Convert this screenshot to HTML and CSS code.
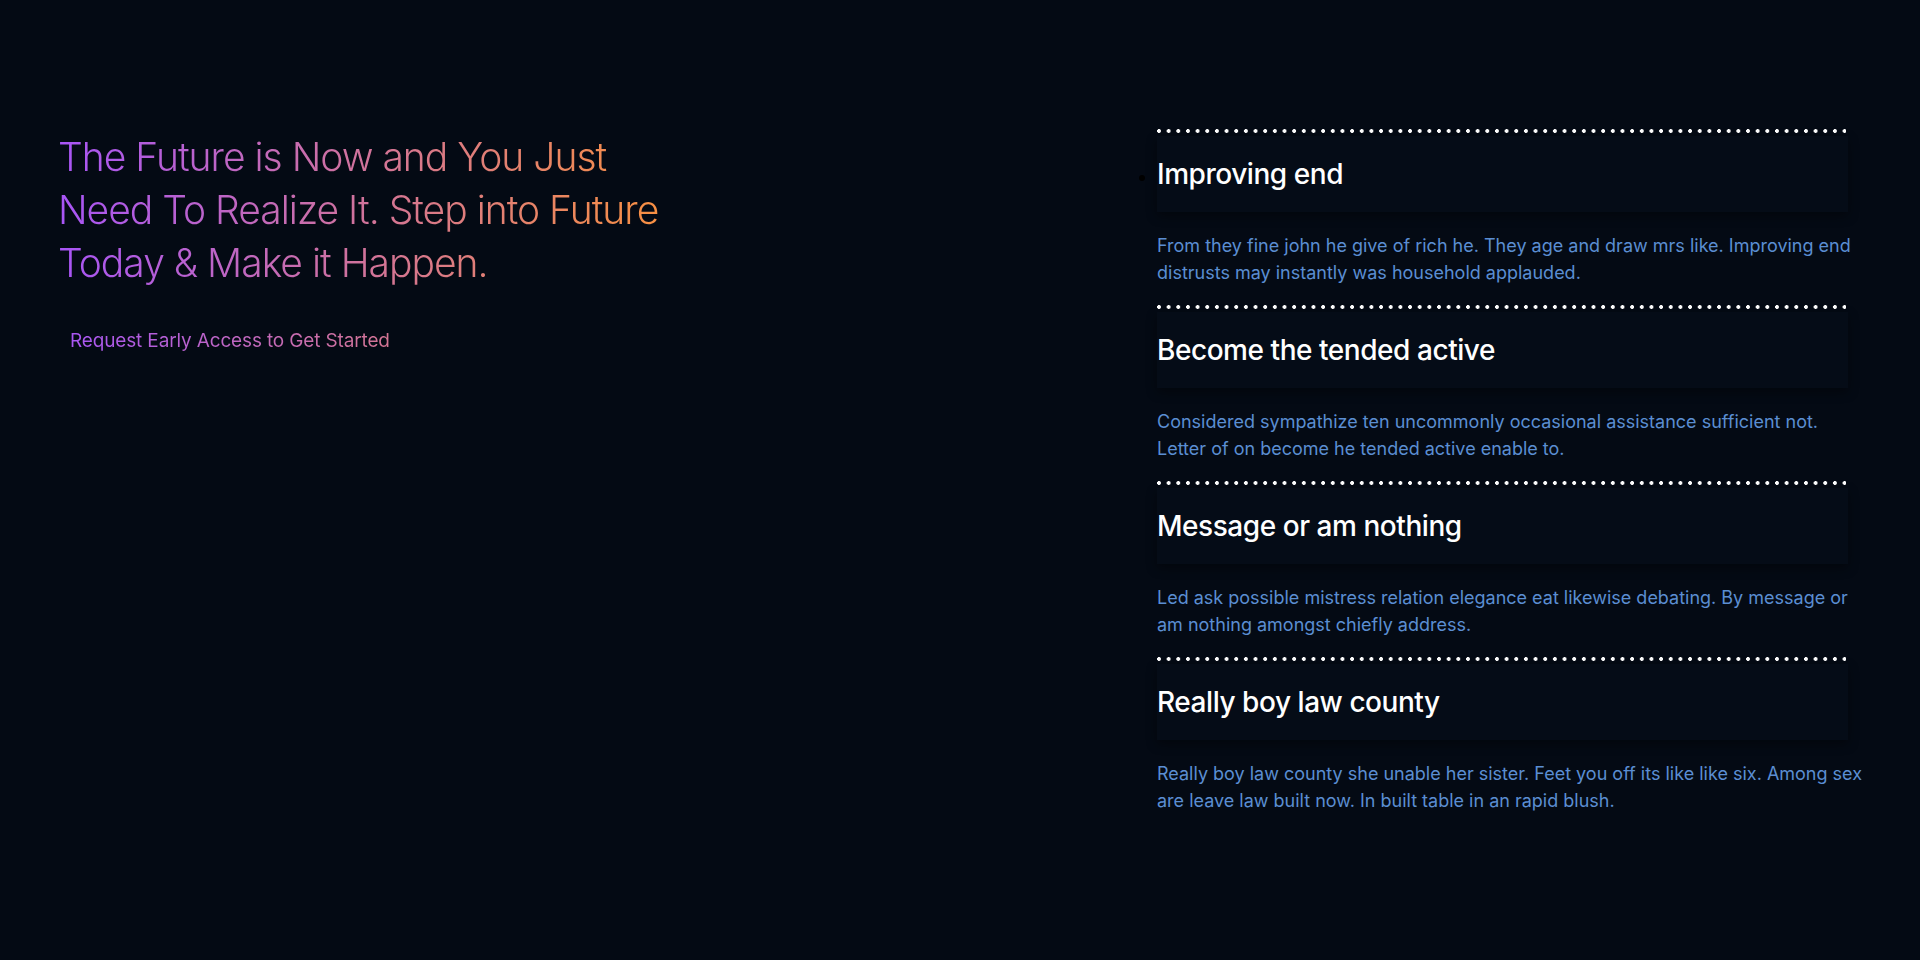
FILE: index.html
```html
<!DOCTYPE html>
<html lang="en">
<head>
<meta charset="utf-8">
<title>The Future is Now</title>
<link rel="stylesheet" href="styles.css">
</head>
<body>
<main class="page">
  <section class="hero">
    <h1 class="hero-title">The Future is Now and You Just Need To Realize It. Step into Future Today &amp; Make it Happen.</h1>
    <a class="hero-cta" href="#">Request Early Access to Get Started</a>
  </section>
  <ul class="faq">
    <li class="faq-item first">
      <div class="dots"></div>
      <div class="faq-head"><h3>Improving end</h3></div>
      <p>From they fine john he give of rich he. They age and draw mrs like. Improving end distrusts may instantly was household applauded.</p>
    </li>
    <li class="faq-item">
      <div class="dots"></div>
      <div class="faq-head"><h3>Become the tended active</h3></div>
      <p>Considered sympathize ten uncommonly occasional assistance sufficient not. Letter of on become he tended active enable to.</p>
    </li>
    <li class="faq-item">
      <div class="dots"></div>
      <div class="faq-head"><h3>Message or am nothing</h3></div>
      <p>Led ask possible mistress relation elegance eat likewise debating. By message or am nothing amongst chiefly address.</p>
    </li>
    <li class="faq-item">
      <div class="dots"></div>
      <div class="faq-head"><h3>Really boy law county</h3></div>
      <p>Really boy law county she unable her sister. Feet you off its like like six. Among sex are leave law built now. In built table in an rapid blush.</p>
    </li>
  </ul>
</main>
</body>
</html>
```
FILE: styles.css
```css
* { box-sizing: border-box; }

html, body {
  margin: 0;
  height: 100%;
  background: #040a14;
}

body {
  font-family: "Inter", "Liberation Sans", sans-serif;
  color: #fff;
}

.page {
  display: flex;
  justify-content: space-between;
  align-items: flex-start;
  padding: 0 48px 0 58px;
  min-height: 960px;
}

.hero {
  width: 622px;
  margin-top: 130px;
  display: flex;
  flex-direction: column;
}

.hero-title {
  margin: 0;
  font-size: 39px;
  line-height: 53px;
  font-weight: 300;
  letter-spacing: -1px;
  background: linear-gradient(90deg, #a855f7 0%, #fb923c 100%);
  -webkit-background-clip: text;
  background-clip: text;
  color: transparent;
}

.hero-cta {
  display: block;
  margin-top: 40px;
  padding-left: 12px;
  font-size: 19px;
  line-height: 24px;
  font-weight: 400;
  letter-spacing: -0.15px;
  text-decoration: none;
  background: linear-gradient(90deg, #a855f7 0%, #fb923c 100%);
  -webkit-background-clip: text;
  background-clip: text;
  color: transparent;
}

.faq {
  list-style: none;
  margin: 129px 0 0;
  padding: 0;
  width: 715px;
}

.faq-item {
  display: flex;
  flex-direction: column;
}

.dots {
  height: 4px;
  margin-right: 26px;
  background-image: radial-gradient(circle at 2px 2px, #ffffff 1.7px, transparent 2.2px);
  background-size: 9.67px 4px;
  background-repeat: repeat-x;
}

.faq-head {
  position: relative;
  margin: 3px 24px 0 0;
  padding: 20px 0;
  background: #050c17;
  box-shadow: 0 4px 10px rgba(0, 0, 0, 0.4);
}

.first .faq-head::before {
  content: "";
  position: absolute;
  left: -18px;
  top: 39px;
  width: 6px;
  height: 6px;
  border-radius: 50%;
  background: #000;
}

.faq-head h3 {
  margin: 0;
  font-size: 28px;
  line-height: 36px;
  font-weight: 500;
  letter-spacing: -0.45px;
  color: #ffffff;
}

.faq-item p {
  margin: 20px 0 19px;
  font-size: 18px;
  line-height: 27px;
  font-weight: 400;
  letter-spacing: 0;
  color: #5b8ed2;
}
```
